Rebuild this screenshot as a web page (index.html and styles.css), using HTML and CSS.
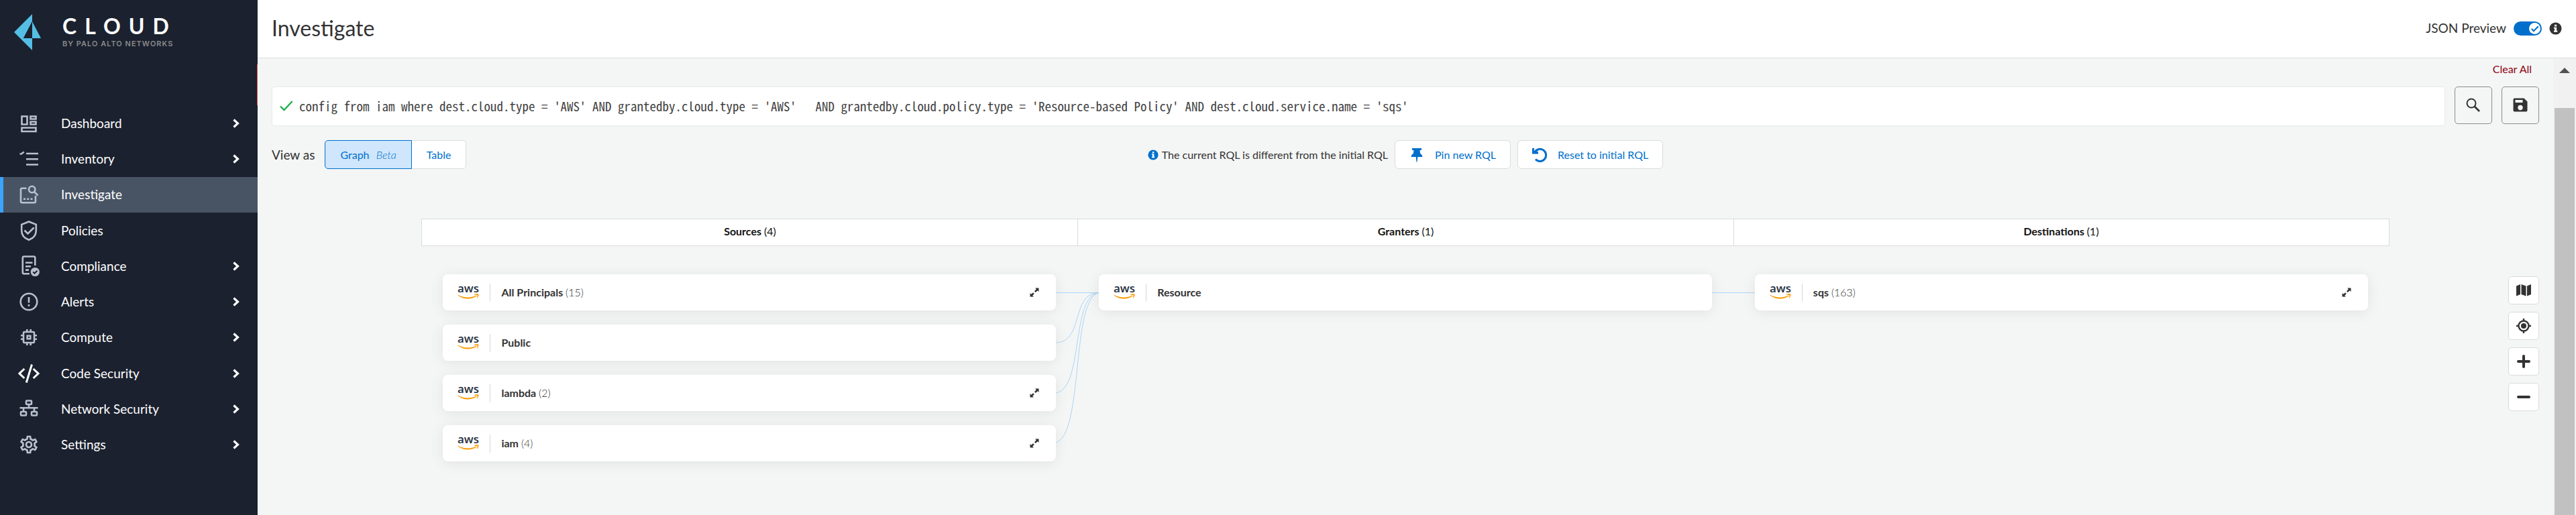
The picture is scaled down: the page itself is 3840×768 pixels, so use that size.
FILE: index.html
```html
<!DOCTYPE html>
<html lang="en">
<head>
<meta charset="utf-8">
<title>Investigate</title>
<link rel="stylesheet" href="styles.css">
</head>
<body>
<svg class="sprite" aria-hidden="true">
  <symbol id="chevron" viewBox="0 0 12 16"><path d="M2.500 2.500 8.500 8 2.500 13.500" fill="none" stroke="currentColor" stroke-width="3.200"/></symbol>
  <symbol id="info" viewBox="0 0 20 20"><circle cx="10" cy="10" r="9.500" fill="currentColor"/><path d="M8.500 4h3.200v2.800H8.500zM7.300 8.200h4.400v5.300h1.200v1.900H7.300v-1.900h1.200v-3.400H7.300z" fill="#fff"/></symbol>
  <symbol id="expand" viewBox="0 0 14 14"><path d="M8 .5h5.500V6L11.700 4.200 8.800 7 7 5.200 9.800 2.300zM.5 8l1.800 1.800L5 7.200 6.800 9l-2.600 2.700L6 13.500H.5z" fill="currentColor"/></symbol>
  <symbol id="aws" viewBox="0 0 32 22">
    <text x="16" y="11" text-anchor="middle" class="aws-word">aws</text>
    <path d="M.3 14.200c8.500 5.300 19 5.600 27.300 1.600.8-.3 1.300.4.600.9C20 22.300 8 21.800.2 15z" fill="#f90"/>
    <path d="M25 14.400c2-1.200 5.500-1.300 6.300-.6.700.8-.3 4.500-2.200 6-.3.200-.7.100-.4-.4.500-1.200 1.300-3.300.9-4-.5-.600-2.800-.4-4.400-.4-.4 0-.5-.3-.2-.6z" fill="#f90"/>
  </symbol>
</svg>
<div class="app">
  <aside class="sidebar">
    <div class="brand">
      <svg class="brand-mark" viewBox="0 0 40 54" aria-hidden="true"><path d="M27 0 0 27l27 27V36H14L27 11l13 25H27z" fill="#54bee4"/><path d="M27 11v25H14z" fill="#1b212f"/></svg>
      <div class="brand-text"><span class="brand-name">CLOUD</span><span class="brand-by">BY PALO ALTO NETWORKS</span></div>
    </div>
    <div class="sidebar-notice"></div>
    <nav class="nav" aria-label="Main">
      <a class="nav-item" href="#dashboard"><svg class="nav-icon" viewBox="0 0 32 32"><path d="M5.500 5.500h8v12h-8zM18.500 5.500h8v4h-8zM18.500 13.500h8v4h-8zM5.500 22.500h21v5.500h-21z"/></svg><span>Dashboard</span><svg class="chevron"><use href="#chevron"/></svg></a>
      <a class="nav-item" href="#inventory"><svg class="nav-icon" viewBox="0 0 32 32"><path d="M12 8h18M12 16.300h18M12 24.500h18M2.500 8.500h2.300l4-3"/></svg><span>Inventory</span><svg class="chevron"><use href="#chevron"/></svg></a>
      <a class="nav-item active" href="#investigate" aria-current="page"><svg class="nav-icon" viewBox="0 0 32 32"><path d="M12.500 6.700H6a2 2 0 0 0-2 2v17.600a2 2 0 0 0 2 2h18a2 2 0 0 0 2-2V18"/><circle cx="20.700" cy="8.500" r="4.700"/><path d="m24 12 5.500 5.500M8 22.700h3M13.200 22.700h3M18.500 22.700h3"/></svg><span>Investigate</span></a>
      <a class="nav-item" href="#policies"><svg class="nav-icon" viewBox="0 0 32 32"><path d="M16 2.500 5.200 6.800v9c0 6.500 4.300 11.700 10.800 14 6.500-2.300 10.800-7.500 10.800-14v-9zM9.500 15.500l5 5 9-9"/></svg><span>Policies</span></a>
      <a class="nav-item" href="#compliance"><svg class="nav-icon" viewBox="0 0 32 32"><path d="M17 27.300H8.800a2 2 0 0 1-2-2V3.500a2 2 0 0 1 2-2h14.500a2 2 0 0 1 2 2V15M11 10.800h10.500M11 16.200h8M11 21.600h5"/><circle cx="25.300" cy="24.500" r="6.600" fill="#b8c0d0" stroke="none"/><path d="m22.300 24.500 2.200 2.200 4-4" stroke="#1b212f" stroke-width="2"/></svg><span>Compliance</span><svg class="chevron"><use href="#chevron"/></svg></a>
      <a class="nav-item" href="#alerts"><svg class="nav-icon" viewBox="0 0 32 32"><circle cx="16" cy="16" r="12.300"/><path d="M16 9v8.500M16 20v2.800"/></svg><span>Alerts</span><svg class="chevron"><use href="#chevron"/></svg></a>
      <a class="nav-item" href="#compute"><svg class="nav-icon" viewBox="0 0 32 32"><rect x="8" y="8" width="16" height="16" rx="1.500"/><path d="M13.700 13.700h4.600v4.600h-4.600zM13.300 4v4M18.700 4v4M13.300 24v4M18.700 24v4M4 13.300h4M4 18.700h4M24 13.300h4M24 18.700h4"/></svg><span>Compute</span><svg class="chevron"><use href="#chevron"/></svg></a>
      <a class="nav-item" href="#code-security"><svg class="nav-icon bright" viewBox="0 0 32 32"><path d="M9.300 9 2 16l7.300 7M22.700 9l7.300 7-7.300 7M20.500 2.500 12.300 29.500"/></svg><span>Code Security</span><svg class="chevron"><use href="#chevron"/></svg></a>
      <a class="nav-item" href="#network-security"><svg class="nav-icon" viewBox="0 0 32 32"><rect x="12" y="3.500" width="8" height="5.500" rx="1"/><rect x="4" y="20" width="8" height="5.500" rx="1"/><rect x="20" y="20" width="8" height="5.500" rx="1"/><path d="M16 9v5M2.500 14.300h27M8 14.500V20M24 14.500V20"/></svg><span>Network Security</span><svg class="chevron"><use href="#chevron"/></svg></a>
      <a class="nav-item" href="#settings"><svg class="nav-icon solid" viewBox="0 0 24 24"><path d="M19.430 12.980c.04-.32.07-.64.07-.98s-.03-.66-.07-.98l2.110-1.650c.19-.15.24-.42.12-.64l-2-3.460c-.09-.16-.26-.25-.44-.25-.06 0-.12.010-.17.030l-2.490 1c-.52-.4-1.080-.73-1.690-.98l-.38-2.650C14.460 2.180 14.250 2 14 2h-4c-.25 0-.46.18-.49.42l-.38 2.650c-.61.25-1.170.59-1.690.98l-2.490-1c-.06-.02-.12-.03-.18-.03-.17 0-.34.09-.43.25l-2 3.460c-.13.22-.07.49.12.64l2.110 1.650c-.04.32-.07.65-.07.98s.03.66.07.98l-2.110 1.650c-.19.15-.24.42-.12.64l2 3.460c.09.16.26.25.44.25.06 0 .12-.01.17-.03l2.490-1c.52.4 1.080.73 1.690.98l.38 2.650c.03.24.24.42.49.42h4c.25 0 .46-.18.49-.42l.38-2.650c.61-.25 1.170-.59 1.690-.98l2.490 1c.06.02.12.03.18.03.17 0 .34-.09.43-.25l2-3.460c.12-.22.07-.49-.12-.64l-2.110-1.650zm-1.980-1.710c.04.31.05.52.05.73 0 .21-.02.43-.05.73l-.14 1.130.89.7 1.080.84-.7 1.210-1.270-.51-1.040-.42-.9.68c-.43.32-.84.56-1.250.73l-1.060.43-.16 1.130-.2 1.350h-1.400l-.19-1.350-.16-1.130-1.060-.43c-.43-.18-.83-.41-1.230-.71l-.91-.7-1.060.43-1.270.51-.7-1.210 1.080-.84.89-.7-.14-1.130c-.03-.31-.05-.54-.05-.74s.02-.43.05-.73l.14-1.130-.89-.7-1.080-.84.7-1.210 1.270.51 1.040.42.9-.68c.43-.32.84-.56 1.250-.73l1.060-.43.16-1.130.2-1.350h1.390l.19 1.350.16 1.130 1.060.43c.43.18.83.41 1.230.71l.91.7 1.060-.43 1.270-.51.7 1.210-1.070.85-.89.7.14 1.130zM12 8c-2.210 0-4 1.790-4 4s1.790 4 4 4 4-1.790 4-4-1.790-4-4-4zm0 6c-1.100 0-2-.9-2-2s.9-2 2-2 2 .9 2 2-.9 2-2 2z"/></svg><span>Settings</span><svg class="chevron"><use href="#chevron"/></svg></a>
    </nav>
  </aside>

  <div class="page">
    <header class="page-header">
      <h1 class="page-title">Investigate</h1>
      <div class="preview">
        <label for="json-preview">JSON Preview</label>
        <span class="toggle">
          <input class="toggle-input" type="checkbox" role="switch" id="json-preview" checked>
          <svg class="toggle-check" viewBox="0 0 16 16" aria-hidden="true"><path d="m3.500 8.500 3 3L13 5" fill="none" stroke="#006fcc" stroke-width="2"/></svg>
        </span>
        <svg class="info-dark" aria-label="About JSON Preview"><use href="#info"/></svg>
      </div>
    </header>

    <div class="viewport">
      <main class="content">
        <div class="clear-row"><button class="clear" type="button">Clear All</button></div>
        <form class="query-row">
          <div class="query-box">
            <svg class="query-ok" viewBox="0 0 20 16" aria-label="Valid query"><path d="m1 8.500 5.500 5.500L18.700 1" fill="none" stroke="#1eb04c" stroke-width="2.400"/></svg>
            <input class="query" type="text" aria-label="Query" spellcheck="false" value="config from iam where dest.cloud.type = 'AWS' AND grantedby.cloud.type = 'AWS'   AND grantedby.cloud.policy.type = 'Resource-based Policy' AND dest.cloud.service.name = 'sqs'">
          </div>
          <button class="square" type="button" aria-label="Search"><svg class="square-icon" viewBox="0 0 24 24"><circle cx="9" cy="9" r="6.500" fill="none" stroke="currentColor" stroke-width="2"/><path d="m13.500 13.500 7.500 7.500" fill="none" stroke="currentColor" stroke-width="2.600"/></svg></button>
          <button class="square" type="button" aria-label="Save"><svg class="square-icon" viewBox="0 0 24 24"><path d="M3.500 1.500h14l5 5v13a2 2 0 0 1-2 2h-17a2 2 0 0 1-2-2v-16a2 2 0 0 1 2-2z" fill="currentColor"/><path d="M4.500 4h11v4h-11z" fill="#f4f6f5"/><circle cx="12" cy="15.500" r="3.700" fill="#f4f6f5"/></svg></button>
        </form>

        <div class="view-row">
          <div class="view-as">
            <span class="view-label">View as</span>
            <div class="segments">
              <button class="segment selected" type="button" aria-pressed="true">Graph <em>Beta</em></button>
              <button class="segment" type="button" aria-pressed="false">Table</button>
            </div>
          </div>
          <div class="rql">
            <p class="rql-note"><svg class="info-blue" aria-hidden="true"><use href="#info"/></svg>The current RQL is different from the initial RQL</p>
            <button class="action" type="button"><svg class="action-icon" viewBox="0 0 22 22"><path d="M4 1h14v3h-2.500l.6 5c1.800.9 3.200 2.500 3.400 5H12.300l-.8 7.500h-1L9.700 14H2.500c.2-2.500 1.600-4.100 3.400-5l.6-5H4z" fill="currentColor"/></svg>Pin new RQL</button>
            <button class="action" type="button"><svg class="action-icon" viewBox="0 0 22 22"><path d="M3.500 7.500A9 9 0 1 1 5 17.500" fill="none" stroke="currentColor" stroke-width="3"/><path d="M0 1h3v5h6v3.500H0z" fill="currentColor"/></svg>Reset to initial RQL</button>
          </div>
          <div></div>
        </div>

        <div class="canvas">
          <section class="graph">
            <div class="lanes">
              <h2 class="lane">Sources <span>(4)</span></h2>
              <h2 class="lane">Granters <span>(1)</span></h2>
              <h2 class="lane">Destinations <span>(1)</span></h2>
            </div>
            <div class="nodes">
              <div class="stack">
                <div class="node"><svg class="aws" aria-label="AWS"><use href="#aws"/></svg><div class="node-name">All Principals <span>(15)</span></div><button class="expand" type="button" aria-label="Expand All Principals"><svg><use href="#expand"/></svg></button></div>
                <div class="node"><svg class="aws" aria-label="AWS"><use href="#aws"/></svg><div class="node-name">Public</div></div>
                <div class="node"><svg class="aws" aria-label="AWS"><use href="#aws"/></svg><div class="node-name">lambda <span>(2)</span></div><button class="expand" type="button" aria-label="Expand lambda"><svg><use href="#expand"/></svg></button></div>
                <div class="node"><svg class="aws" aria-label="AWS"><use href="#aws"/></svg><div class="node-name">iam <span>(4)</span></div><button class="expand" type="button" aria-label="Expand iam"><svg><use href="#expand"/></svg></button></div>
              </div>
              <svg class="edges" viewBox="0 0 64 278" preserveAspectRatio="none" aria-hidden="true"><path d="M0 27.500H64M0 102C42 102 22 27.500 64 27.500M0 177C42 170 22 32 64 27.500M0 251C42 238 22 38 64 27.500"/></svg>
              <div class="stack">
                <div class="node"><svg class="aws" aria-label="AWS"><use href="#aws"/></svg><div class="node-name">Resource</div></div>
              </div>
              <svg class="edges" viewBox="0 0 64 278" preserveAspectRatio="none" aria-hidden="true"><path d="M0 27.500H64"/></svg>
              <div class="stack">
                <div class="node"><svg class="aws" aria-label="AWS"><use href="#aws"/></svg><div class="node-name">sqs <span>(163)</span></div><button class="expand" type="button" aria-label="Expand sqs"><svg><use href="#expand"/></svg></button></div>
              </div>
            </div>
          </section>
          <div class="tools">
            <button class="tool" type="button" aria-label="Map"><svg viewBox="0 0 24 24"><path d="M1 5.500 7 3v15l-6 2.500zM8.500 3l7 2.500v15l-7-2.500zM17 5.500 23 3v15l-6 2.500z" fill="currentColor"/></svg></button>
            <button class="tool" type="button" aria-label="Centre"><svg viewBox="0 0 24 24"><circle cx="12" cy="12" r="7.500" fill="none" stroke="currentColor" stroke-width="2.400"/><circle cx="12" cy="12" r="4" fill="currentColor"/><path d="M12 1v4M12 19v4M1 12h4M19 12h4" stroke="currentColor" stroke-width="2.400"/></svg></button>
            <button class="tool" type="button" aria-label="Zoom in"><svg viewBox="0 0 24 24"><path d="M4 12h16M12 4v16" stroke="currentColor" stroke-width="4" stroke-linecap="round"/></svg></button>
            <button class="tool" type="button" aria-label="Zoom out"><svg viewBox="0 0 24 24"><path d="M4 12h16" stroke="currentColor" stroke-width="4" stroke-linecap="round"/></svg></button>
          </div>
        </div>
      </main>
      <div class="scrollbar" aria-hidden="true">
        <svg class="scroll-up" viewBox="0 0 16 8"><path d="M8 0 16 8H0z" fill="#505050"/></svg>
        <div class="scroll-thumb"></div>
      </div>
    </div>
  </div>
</div>
</body>
</html>
```
FILE: styles.css
```css
* {
  box-sizing: border-box;
}

body {
  margin: 0;
  font-family: Lato, "Liberation Sans", sans-serif;
  font-size: 16px;
  color: #333;
  background: #f4f6f5;
}

button {
  font: inherit;
  color: inherit;
  margin: 0;
  padding: 0;
  border: 0;
  background: none;
}

h1, h2, p {
  margin: 0;
}

.sprite {
  display: none;
}

.app {
  display: flex;
  height: 100vh;
  overflow: hidden;
}

/* Sidebar */

.sidebar {
  flex: 0 0 384px;
  background: #1b212f;
  color: #fff;
}

.brand {
  display: flex;
  height: 96px;
  padding: 21px 0 0 21px;
  gap: 32px;
}

.brand-mark {
  width: 40px;
  height: 54px;
}

.brand-text {
  display: flex;
  flex-direction: column;
}

.brand-name {
  font-size: 32px;
  line-height: 36px;
  font-weight: 700;
  letter-spacing: 12px;
}

.brand-by {
  font-family: Inter, sans-serif;
  font-size: 11px;
  line-height: 16px;
  font-weight: 600;
  letter-spacing: 1px;
  color: #8a8a8a;
}

.sidebar-notice {
  height: 61px;
  border-right: 1px solid #d9534f;
}

.nav {
  display: grid;
  grid-template-rows: repeat(10, 1fr);
  height: 533px;
}

.nav-item {
  display: flex;
  align-items: center;
  padding: 0 26px 0 22px;
  border-left: 5px solid transparent;
  color: #fff;
  font-size: 19px;
  line-height: 22px;
  text-decoration: none;
}

.nav-item.active {
  background: #485464;
  border-left-color: #3ba4ff;
}

.nav-item span {
  flex: 1;
  padding-left: 32px;
}

.nav-icon {
  width: 32px;
  height: 32px;
  fill: none;
  stroke: #b8c0d0;
  stroke-width: 2.600;
}

.nav-icon.bright {
  stroke: #fff;
  stroke-width: 3;
}

.nav-icon.solid {
  fill: #b8c0d0;
  stroke: none;
}

.chevron {
  width: 12px;
  height: 16px;
}

/* Page */

.page {
  flex: 1;
  display: flex;
  flex-direction: column;
  min-width: 0;
}

.page-header {
  display: flex;
  justify-content: space-between;
  align-items: center;
  height: 87px;
  padding: 0 21px 2px;
  background: #fff;
  border-bottom: 1px solid #dadcdb;
}

.page-title {
  font-size: 32px;
  line-height: 36px;
  font-weight: 400;
}

.preview {
  display: flex;
  align-items: center;
  gap: 11px;
  font-size: 19px;
  line-height: 22px;
}

.toggle {
  position: relative;
  display: flex;
}

.toggle-input {
  appearance: none;
  width: 42px;
  height: 21px;
  margin: 0;
  border-radius: 11px;
  background: #006fcc;
}

.toggle-check {
  position: absolute;
  right: 2px;
  top: 2px;
  width: 17px;
  height: 17px;
  border-radius: 50%;
  background: #fff;
  pointer-events: none;
}

.info-dark {
  width: 19px;
  height: 19px;
}

.viewport {
  flex: 1;
  display: flex;
  min-height: 0;
}

.content {
  flex: 1;
  min-width: 0;
}

.clear-row {
  display: flex;
  justify-content: flex-end;
  height: 42px;
  padding: 6px 32px 0 0;
}

.clear {
  height: 20px;
  line-height: 20px;
  color: #8e0014;
}

.query-row {
  display: flex;
  gap: 14px;
  padding: 0 21px;
}

.query-box {
  flex: 1;
  display: flex;
  align-items: center;
  gap: 9px;
  height: 59px;
  padding: 0 11px 2px;
  background: #fff;
  border: 1px solid #e8eae9;
  border-radius: 4px;
}

.query-ok {
  width: 20px;
  height: 16px;
}

.query {
  flex: 1;
  padding: 0;
  border: 0;
  outline: 0;
  background: none;
  color: #444;
  font-family: "Noto Sans Mono CJK SC", "Liberation Mono", monospace;
  font-size: 19px;
}

.square {
  display: flex;
  align-items: center;
  justify-content: center;
  width: 56px;
  height: 56px;
  border: 1px solid #8a8d8c;
  border-radius: 5px;
}

.square-icon {
  width: 24px;
  height: 24px;
}

.view-row {
  display: grid;
  grid-template-columns: 1fr auto 1fr;
  align-items: center;
  padding: 21px 21px 0;
}

.view-as {
  display: flex;
  align-items: center;
  gap: 15px;
}

.view-label {
  font-size: 19px;
}

.segments {
  display: flex;
}

.segment {
  height: 43px;
  padding: 0 22px;
  background: #fff;
  color: #006fcc;
  border: 1px solid #dadcdb;
  border-left: 0;
  border-radius: 0 5px 5px 0;
}

.segment.selected {
  background: #cfe6fc;
  border: 1px solid #006fcc;
  border-radius: 5px 0 0 5px;
}

.segment em {
  padding-left: 6px;
  font-weight: 300;
}

.rql {
  display: flex;
  align-items: center;
  gap: 10px;
}

.rql-note {
  display: flex;
  align-items: center;
  gap: 5px;
}

.info-blue {
  width: 16px;
  height: 16px;
  color: #006fcc;
}

.action {
  display: flex;
  align-items: center;
  gap: 16px;
  height: 43px;
  padding: 0 21px;
  background: #fff;
  color: #006fcc;
  border: 1px solid #dadcdb;
  border-radius: 6px;
}

.action-icon {
  width: 22px;
  height: 22px;
}

/* Graph */

.canvas {
  display: grid;
  grid-template-columns: 1fr 12fr 1fr;
  padding-top: 74px;
}

.graph {
  grid-column: 2;
}

.lanes {
  display: grid;
  grid-template-columns: repeat(3, 1fr);
  background: #fff;
  border: 1px solid #dadcdb;
}

.lane {
  height: 39px;
  line-height: 35px;
  text-align: center;
  color: #111;
  font-size: 16px;
  font-weight: 700;
}

.lane + .lane {
  border-left: 1px solid #dadcdb;
}

.lane span {
  font-weight: 400;
}

.nodes {
  display: flex;
  padding: 42px 32px 0;
}

.stack {
  flex: 1;
  display: flex;
  flex-direction: column;
  gap: 21px;
}

.node {
  display: flex;
  align-items: center;
  height: 54px;
  padding: 0 21px 0 22px;
  background: #fff;
  border-radius: 8px;
  box-shadow: 0 3px 20px rgba(0, 0, 0, 0.08);
}

.aws {
  width: 32px;
  height: 22px;
}

.aws-word {
  font-family: "Open Sans", sans-serif;
  font-size: 17px;
  font-weight: 600;
  fill: #252f3e;
}

.node-name {
  flex: 1;
  margin-left: 16px;
  padding: 0 0 2px 16px;
  border-left: 1px solid #d4d6d5;
  line-height: 25px;
  font-weight: 700;
}

.node-name span {
  font-weight: 300;
}

.expand {
  display: flex;
  padding: 4px;
}

.expand svg {
  width: 14px;
  height: 14px;
}

.edges {
  flex: 0 0 64px;
  height: 278px;
  fill: none;
  stroke: #add4f6;
  stroke-width: 1;
}

.tools {
  display: flex;
  flex-direction: column;
  align-items: flex-end;
  gap: 11px;
  padding: 86px 21px 0 0;
}

.tool {
  display: flex;
  align-items: center;
  justify-content: center;
  width: 46px;
  height: 42px;
  background: #fff;
  border: 1px solid #dadcdb;
  border-radius: 5px;
}

.tool svg {
  width: 24px;
  height: 24px;
}

/* Scrollbar */

.scrollbar {
  display: flex;
  flex-direction: column;
  align-items: center;
  flex: 0 0 34px;
  padding: 14px 2px 0;
  background: #f1f1f1;
}

.scroll-up {
  width: 16px;
  height: 8px;
}

.scroll-thumb {
  flex: 1;
  align-self: stretch;
  margin-top: 52px;
  background: #c1c1c1;
}
```
